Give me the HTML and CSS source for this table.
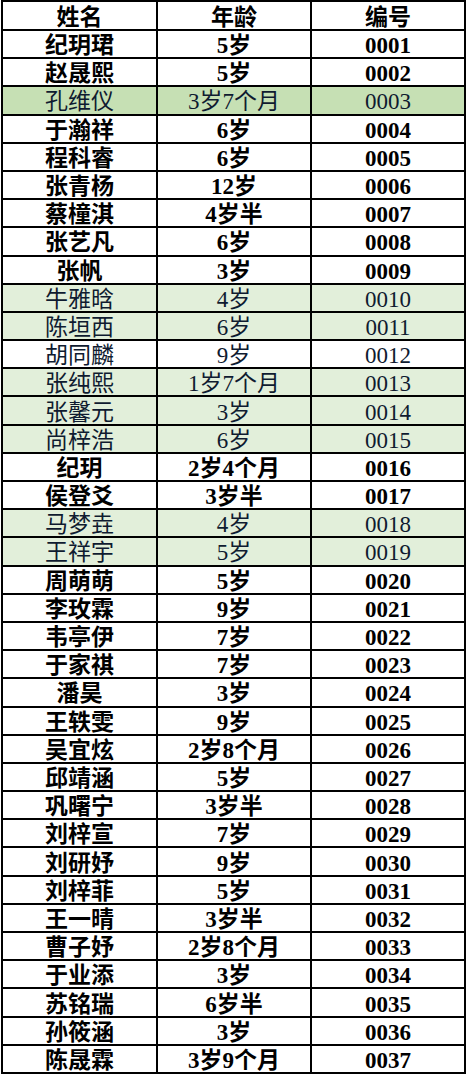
FILE: index.html
```html
<!DOCTYPE html>
<html lang="zh-CN">
<head>
<meta charset="utf-8">
<title>名单</title>
<link rel="stylesheet" href="styles.css">
</head>
<body>
<div class="sheet">
  <div class="row head"><div>姓名</div><div>年龄</div><div>编号</div></div>
  <div class="row"><div>纪玥珺</div><div>5岁</div><div>0001</div></div>
  <div class="row"><div>赵晟熙</div><div>5岁</div><div>0002</div></div>
  <div class="row plain strong-green"><div>孔维仪</div><div>3岁7个月</div><div>0003</div></div>
  <div class="row"><div>于瀚祥</div><div>6岁</div><div>0004</div></div>
  <div class="row"><div>程科睿</div><div>6岁</div><div>0005</div></div>
  <div class="row"><div>张青杨</div><div>12岁</div><div>0006</div></div>
  <div class="row"><div>蔡橦淇</div><div>4岁半</div><div>0007</div></div>
  <div class="row"><div>张艺凡</div><div>6岁</div><div>0008</div></div>
  <div class="row"><div>张帆</div><div>3岁</div><div>0009</div></div>
  <div class="row plain light-green"><div>牛雅晗</div><div>4岁</div><div>0010</div></div>
  <div class="row plain light-green"><div>陈垣西</div><div>6岁</div><div>0011</div></div>
  <div class="row plain"><div>胡同麟</div><div>9岁</div><div>0012</div></div>
  <div class="row plain light-green"><div>张纯熙</div><div>1岁7个月</div><div>0013</div></div>
  <div class="row plain light-green"><div>张馨元</div><div>3岁</div><div>0014</div></div>
  <div class="row plain light-green"><div>尚梓浩</div><div>6岁</div><div>0015</div></div>
  <div class="row"><div>纪玥</div><div>2岁4个月</div><div>0016</div></div>
  <div class="row"><div>侯登爻</div><div>3岁半</div><div>0017</div></div>
  <div class="row plain light-green"><div>马梦垚</div><div>4岁</div><div>0018</div></div>
  <div class="row plain light-green"><div>王祥宇</div><div>5岁</div><div>0019</div></div>
  <div class="row"><div>周萌萌</div><div>5岁</div><div>0020</div></div>
  <div class="row"><div>李玫霖</div><div>9岁</div><div>0021</div></div>
  <div class="row"><div>韦亭伊</div><div>7岁</div><div>0022</div></div>
  <div class="row"><div>于家祺</div><div>7岁</div><div>0023</div></div>
  <div class="row"><div>潘昊</div><div>3岁</div><div>0024</div></div>
  <div class="row"><div>王轶雯</div><div>9岁</div><div>0025</div></div>
  <div class="row"><div>吴宜炫</div><div>2岁8个月</div><div>0026</div></div>
  <div class="row"><div>邱靖涵</div><div>5岁</div><div>0027</div></div>
  <div class="row"><div>巩曙宁</div><div>3岁半</div><div>0028</div></div>
  <div class="row"><div>刘梓宣</div><div>7岁</div><div>0029</div></div>
  <div class="row"><div>刘研妤</div><div>9岁</div><div>0030</div></div>
  <div class="row"><div>刘梓菲</div><div>5岁</div><div>0031</div></div>
  <div class="row"><div>王一晴</div><div>3岁半</div><div>0032</div></div>
  <div class="row"><div>曹子妤</div><div>2岁8个月</div><div>0033</div></div>
  <div class="row"><div>于业添</div><div>3岁</div><div>0034</div></div>
  <div class="row"><div>苏铭瑞</div><div>6岁半</div><div>0035</div></div>
  <div class="row"><div>孙筱涵</div><div>3岁</div><div>0036</div></div>
  <div class="row"><div>陈晟霖</div><div>3岁9个月</div><div>0037</div></div>
</div>
</body>
</html>
```
FILE: styles.css
```css
html, body {
  margin: 0;
  padding: 0;
  background: #ffffff;
}

.sheet {
  margin-left: 1px;
  width: 465px;
  height: 1074px;
  box-sizing: border-box;
  padding: 2px;
  background: #000000;
  display: grid;
  grid-template-columns: 153px 152px 152px;
  grid-template-rows: 27px repeat(37, 1fr);
  gap: 2px;
  font-family: "Liberation Serif", "Noto Sans CJK SC", serif;
  font-size: 23px;
  line-height: 1;
  color: #000000;
}

.row {
  display: contents;
}

.row > div {
  background: #ffffff;
  display: flex;
  align-items: center;
  justify-content: center;
  font-weight: 700;
  padding-top: 3px;
  white-space: nowrap;
}

.row.plain > div {
  font-weight: 400;
  color: #0f1b30;
}

.row.strong-green > div {
  background: #c6e0b4;
}

.row.light-green > div {
  background: #e2efda;
}
```
